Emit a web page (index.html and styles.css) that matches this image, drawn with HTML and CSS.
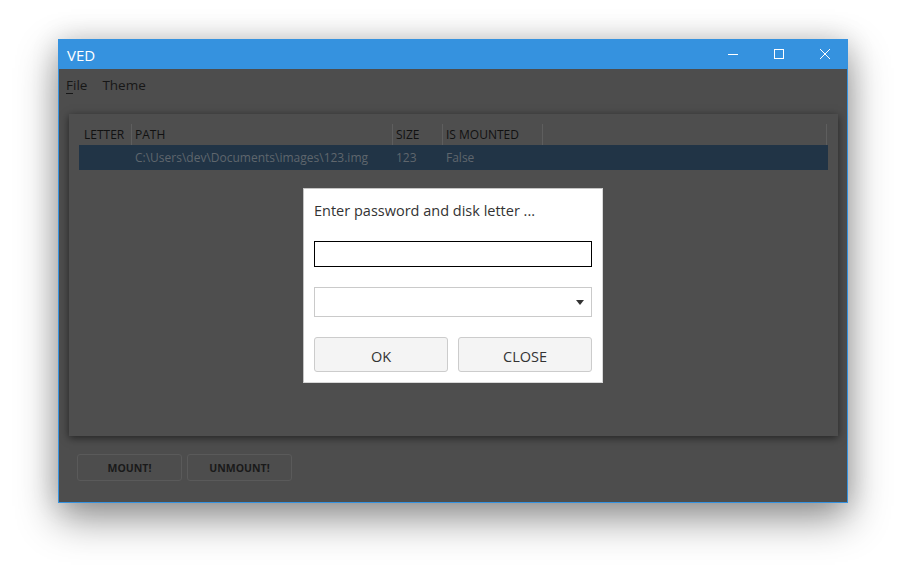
FILE: index.html
```html
<!DOCTYPE html>
<html>
<head>
<meta charset="utf-8">
<link rel="stylesheet" href="styles.css">
</head>
<body>
<div class="window">
  <div class="titlebar">
    <span class="title">VED</span>
    <div class="controls">
      <span class="ctl"><svg width="12" height="12" viewBox="0 0 12 12"><path d="M1 6.5h10" stroke="#fff" stroke-width="1"/></svg></span>
      <span class="ctl"><svg width="12" height="12" viewBox="0 0 12 12"><rect x="1.5" y="1.5" width="9" height="9" fill="none" stroke="#fff" stroke-width="1"/></svg></span>
      <span class="ctl"><svg width="12" height="12" viewBox="0 0 12 12"><path d="M1 1L11 11M11 1L1 11" stroke="#fff" stroke-width="1"/></svg></span>
    </div>
  </div>
  <div class="content">
    <div class="menu">
      <span class="menu-item"><u>F</u>ile</span>
      <span class="menu-item">Theme</span>
    </div>
    <div class="panel">
      <div class="table">
        <div class="thead">
          <div class="th c1">LETTER</div>
          <div class="th c2">PATH</div>
          <div class="th c3">SIZE</div>
          <div class="th c4">IS MOUNTED</div>
          <div class="th c5"></div>
        </div>
        <div class="row">
          <div class="td c1"></div>
          <div class="td c2">C:\Users\dev\Documents\images\123.img</div>
          <div class="td c3">123</div>
          <div class="td c4">False</div>
        </div>
      </div>
    </div>
    <div class="actions">
      <button class="act">MOUNT!</button>
      <button class="act">UNMOUNT!</button>
    </div>
    <div class="dialog">
      <div class="dlg-title">Enter password and disk letter ...</div>
      <div class="dlg-input"></div>
      <div class="dlg-combo"><svg width="8" height="5" viewBox="0 0 8 5"><path d="M0 0h8L4 5z" fill="#333"/></svg></div>
      <div class="dlg-buttons">
        <button class="dlg-btn">OK</button>
        <button class="dlg-btn">CLOSE</button>
      </div>
    </div>
  </div>
</div>
</body>
</html>
```
FILE: styles.css
```css
* { box-sizing: border-box; }
html, body { margin: 0; padding: 0; background: #fff; }
html { height: 100%; }
body { min-height: 578px; padding: 39px 0 0 58px; font-family: "Open Sans", "Noto Sans", sans-serif; }

.window {
  width: 790px;
  height: 464px;
  display: flex;
  flex-direction: column;
  box-shadow: 0 16px 38px rgba(0,0,0,0.42), 0 0 26px rgba(0,0,0,0.14);
}
.titlebar {
  height: 30px;
  background: #3592df;
  display: flex;
  align-items: center;
  justify-content: space-between;
  padding-left: 9px;
}
.title { color: #fff; font-size: 15px; font-family: "Open Sans", sans-serif; padding-top: 1px; }
.controls { display: flex; height: 100%; }
.ctl { width: 46px; height: 100%; display: flex; align-items: center; justify-content: center; }

.content {
  flex: 1;
  position: relative;
  background: #4d4d4d;
  border: 1px solid #3592df;
  border-top: none;
  display: flex;
  flex-direction: column;
}
.menu {
  height: 36px;
  display: flex;
  align-items: center;
  padding-left: 7px;
  padding-bottom: 4px;
  gap: 15px;
  font-size: 13.5px;
  color: #171717;
}
.menu u { text-decoration-thickness: 1px; text-underline-offset: 3px; }

.panel {
  margin: 9px 9px 0 10px;
  height: 322px;
  background: #4e4e4e;
  box-shadow: 0 2px 8px rgba(0,0,0,0.55);
  padding: 10px 10px 0 10px;
}
.table { font-size: 12px; }
.thead { display: flex; height: 21px; align-items: center; color: #111; }
.th { height: 21px; line-height: 21px; padding-left: 5px; border-right: 1px solid #5e5e5e; white-space: nowrap; }
.th.c2, .th.c3, .th.c4 { padding-left: 3px; }
.c1 { width: 53px; }
.c2 { width: 261px; }
.c3 { width: 50px; }
.c4 { width: 100px; }
.c5 { width: 284px; }
.row { display: flex; height: 25px; align-items: center; background: #213446; color: #5f666d; }
.td { padding-left: 3px; white-space: nowrap; }
.td.c1 { padding-left: 6px; }

.actions { display: flex; gap: 5px; margin: 18px 0 0 18px; }
.act {
  width: 105px; height: 27px;
  background: #4d4d4d;
  border: 1px solid #5a5a5a;
  border-radius: 3px;
  font-family: "Open Sans", sans-serif;
  font-weight: 700;
  font-size: 10.5px;
  color: #1a1a1a;
  padding: 0;
}

.dialog {
  position: absolute;
  left: 244px;
  top: 119px;
  width: 300px;
  height: 195px;
  background: #fff;
  border: 1px solid #c4c4c4;
  border-right-color: #d8d8d8;
  border-bottom-color: #d8d8d8;
  padding: 10px 10px 0 10px;
  display: flex;
  flex-direction: column;
}
.dlg-title { font-size: 14.5px; color: #333; margin-top: 2px; height: 27px; font-weight: 400; }
.dlg-input { margin-top: 13px; height: 26px; border: 1px solid #000; }
.dlg-combo {
  margin-top: 20px; height: 30px; border: 1px solid #cacaca;
  display: flex; align-items: center; justify-content: flex-end; padding-right: 7px;
}
.dlg-buttons { display: flex; gap: 10px; margin-top: 20px; }
.dlg-btn {
  flex: 1; height: 35px;
  background: #f4f4f4;
  border: 1px solid #cccccc;
  border-radius: 3px;
  font-family: "Open Sans", sans-serif;
  font-size: 14.5px;
  color: #333;
  padding: 3px 0 0 0;
}
```
